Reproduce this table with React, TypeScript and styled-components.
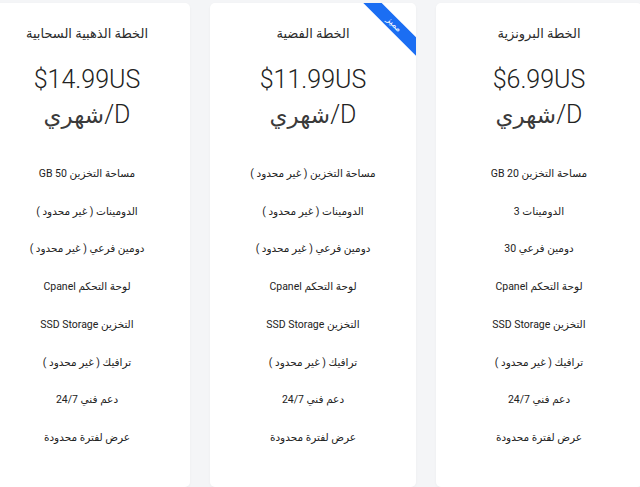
import React from 'react';
import styled, { createGlobalStyle } from 'styled-components';

const GlobalStyle = createGlobalStyle`
  html, body {
    margin: 0;
    padding: 0;
    background: #f4f5f7;
    overflow: hidden;
  }
  body {
    font-family: Roboto, 'DejaVu Sans', sans-serif;
    color: #212529;
  }
`;

const Row = styled.div`
  direction: rtl;
  display: flex;
  gap: 20px;
  margin-right: -2px;
  padding-top: 3px;
  height: 487px;
  box-sizing: border-box;
`;

const Card = styled.div`
  position: relative;
  overflow: hidden;
  flex: 0 0 206px;
  background: #fff;
  border-radius: 5px;
  box-shadow: 0 1px 3px rgba(0, 0, 0, 0.04);
  padding-top: 21px;
  text-align: center;
`;

const Title = styled.h3`
  margin: 0;
  font-size: 13px;
  font-weight: 400;
  line-height: 20px;
  color: #2b2b2b;
`;

const Price = styled.div`
  margin-top: 18px;
  font-size: 25px;
  font-weight: 300;
  color: #222;
`;

const PriceLine = styled.div`
  height: 35px;
  line-height: 35px;
`;

const Period = styled.span`
  font-weight: 400;
  font-size: 23px;
  color: #3a3a3a;
`;

const Features = styled.ul`
  list-style: none;
  margin: 23px 0 0;
  padding: 0;
`;

const Feature = styled.li`
  font-size: 10.5px;
  line-height: 37.7px;
  color: #222;
`;

const Ribbon = styled.div`
  position: absolute;
  top: 15px;
  right: -18px;
  width: 80px;
  height: 13px;
  line-height: 13px;
  background: #1b6ef3;
  color: #fff;
  font-size: 9px;
  text-align: center;
  transform: rotate(45deg);
`;

type Plan = {
  name: string;
  price: string;
  featured?: boolean;
  features: string[];
};

const unlimited = '( غير محدود )';

const plans: Plan[] = [
  {
    name: 'الخطة البرونزية',
    price: '$6.99US',
    features: [
      'مساحة التخزين 20 GB',
      'الدومينات 3',
      'دومين فرعي 30',
      'لوحة التحكم Cpanel',
      'التخزين SSD Storage',
      `ترافيك ${unlimited}`,
      'دعم فني 24/7',
      'عرض لفترة محدودة',
    ],
  },
  {
    name: 'الخطة الفضية',
    price: '$11.99US',
    featured: true,
    features: [
      `مساحة التخزين ${unlimited}`,
      `الدومينات ${unlimited}`,
      `دومين فرعي ${unlimited}`,
      'لوحة التحكم Cpanel',
      'التخزين SSD Storage',
      `ترافيك ${unlimited}`,
      'دعم فني 24/7',
      'عرض لفترة محدودة',
    ],
  },
  {
    name: 'الخطة الذهبية السحابية',
    price: '$14.99US',
    features: [
      'مساحة التخزين 50 GB',
      `الدومينات ${unlimited}`,
      `دومين فرعي ${unlimited}`,
      'لوحة التحكم Cpanel',
      'التخزين SSD Storage',
      `ترافيك ${unlimited}`,
      'دعم فني 24/7',
      'عرض لفترة محدودة',
    ],
  },
];

const renderPlan = (plan: Plan) => (
  <Card key={plan.name}>
    {plan.featured && <Ribbon>مميز</Ribbon>}
    <Title>{plan.name}</Title>
    <Price>
      <PriceLine>{plan.price}</PriceLine>
      <PriceLine>
        D/<Period>شهري</Period>
      </PriceLine>
    </Price>
    <Features>
      {plan.features.map((f) => (
        <Feature key={f}>{f}</Feature>
      ))}
    </Features>
  </Card>
);

const App = () => (
  <>
    <GlobalStyle />
    <Row>{plans.map(renderPlan)}</Row>
  </>
);

export default App;
